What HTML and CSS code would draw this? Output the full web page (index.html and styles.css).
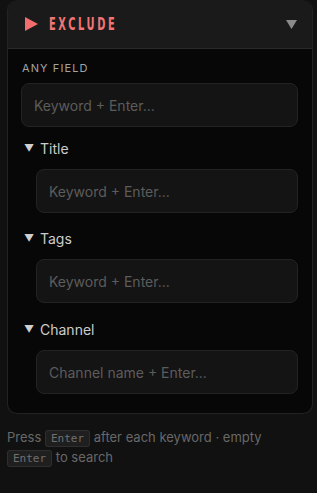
FILE: index.html
```html
<!DOCTYPE html>
<html>
<head>
<meta charset="utf-8">
<link rel="stylesheet" href="styles.css">
</head>
<body>
<div class="card">
  <div class="card-head">
    <div class="title">
      <svg class="play" width="14" height="14" viewBox="0 0 14 14"><path d="M0 0 L13 7 L0 14 Z" fill="#f26d6d"/></svg>
      <span class="title-text">EXCLUDE</span>
    </div>
    <svg class="chev" width="11" height="9" viewBox="0 0 11 9"><path d="M0 0 H11 L5.5 9 Z" fill="#8a8a8a"/></svg>
  </div>
  <div class="card-body">
    <div class="label">ANY FIELD</div>
    <div class="input">Keyword + Enter...</div>
    <div class="section first">
      <div class="sec-row"><span class="tri">▼</span><span>Title</span></div>
      <div class="input indent">Keyword + Enter...</div>
    </div>
    <div class="section">
      <div class="sec-row"><span class="tri">▼</span><span>Tags</span></div>
      <div class="input indent">Keyword + Enter...</div>
    </div>
    <div class="section last">
      <div class="sec-row"><span class="tri">▼</span><span>Channel</span></div>
      <div class="input indent">Channel name + Enter...</div>
    </div>
  </div>
</div>
<p class="hint">Press <kbd>Enter</kbd> after each keyword · empty <kbd>Enter</kbd> to search</p>
</body>
</html>
```
FILE: styles.css
```css
html, body {
  margin: 0;
  padding: 0;
  background: #111111;
}
body {
  font-family: Inter, "DejaVu Sans", sans-serif;
  width: 317px;
  height: 493px;
  overflow: hidden;
}
.card {
  margin: 0 4px 0 7px;
  border: 1px solid #232323;
  border-top: none;
  border-radius: 10px;
  background: #070707;
  overflow: hidden;
}
.card-head {
  height: 48px;
  background: #1a1a1a;
  border-bottom: 1px solid #2a2a2a;
  display: flex;
  align-items: center;
  justify-content: space-between;
  padding: 0 15px 0 17px;
}
.title {
  display: flex;
  align-items: center;
  gap: 10px;
}
.title-text {
  display: inline-block;
  font-family: "DejaVu Sans", sans-serif;
  font-weight: bold;
  font-size: 17px;
  letter-spacing: 4.5px;
  color: #f07575;
  transform: scaleX(0.58);
  transform-origin: left center;
}
.card-body {
  padding: 12px 14px 19px 13px;
}
.label {
  font-size: 11px;
  line-height: 14px;
  letter-spacing: 1.1px;
  color: #a3a3a3;
  margin-bottom: 8px;
  padding-left: 1px;
}
.input {
  height: 42px;
  border: 1px solid #232323;
  border-radius: 8px;
  background: #141414;
  color: #5c5c5c;
  font-size: 14px;
  display: flex;
  align-items: center;
  padding-left: 12px;
}
.input.indent {
  margin-left: 15px;
}
.section {
  margin-top: 16px;
}
.section.first {
  margin-top: 12px;
}
.section.last {
  margin-top: 17px;
}
.sec-row {
  height: 18px;
  display: flex;
  align-items: center;
  color: #cccccc;
  font-size: 14px;
  margin-bottom: 12px;
  padding-left: 3px;
}
.tri {
  font-size: 10px;
  width: 16px;
  color: #cfcfcf;
}
.hint {
  margin: 13px 0 0 7px;
  font-size: 13px;
  line-height: 20px;
  color: #686868;
  padding-right: 10px;
}
kbd {
  font-family: "DejaVu Sans Mono", monospace;
  font-size: 11px;
  line-height: 14px;
  background: #1f1f1f;
  border: 1px solid #2e2e2e;
  border-radius: 3px;
  padding: 1px 5px;
  color: #707070;
}
```
